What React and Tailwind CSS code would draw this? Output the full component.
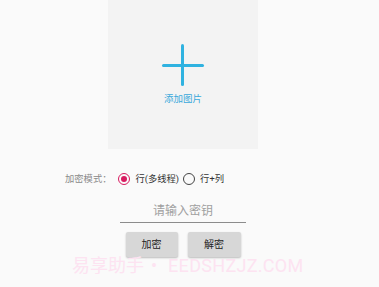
export default function App() {
  const font = { fontFamily: '"Roboto", "Noto Sans CJK SC", sans-serif' };
  return (
    <div className="w-[379px] h-[287px] bg-[#fafafa] overflow-hidden relative" style={font}>
      <div className="w-[366px] flex flex-col items-center">
        <div className="w-[150px] h-[149px] bg-[#f3f3f3] flex flex-col items-center">
          <div className="mt-[44px] w-[42px] h-[42px] relative">
            <div className="absolute left-[19px] top-0 w-[3px] h-[42px] bg-[#2fb2e0] rounded-full" />
            <div className="absolute top-[20px] left-0 h-[3px] w-[42px] bg-[#2fb2e0] rounded-full" />
          </div>
          <div className="mt-[6px] text-[9.5px] leading-[14px] text-[#3aa9db]">添加图片</div>
        </div>

        <div className="self-start pl-[65px] mt-[23px] flex items-center h-[14px] text-[9.3px] leading-[14px]">
          <span className="text-[#8a8a8a] mr-[6px]">加密模式：</span>
          <span className="w-[12px] h-[12px] rounded-full border-[1.5px] border-[#d81b60] flex items-center justify-center">
            <span className="w-[6px] h-[6px] rounded-full bg-[#d81b60]" />
          </span>
          <span className="ml-[6px] text-[#333]">行(多线程)</span>
          <span className="ml-[4px] w-[12px] h-[12px] rounded-full border-[1.5px] border-[#444]" />
          <span className="ml-[5px] text-[#333]">行+列</span>
        </div>

        <div className="mt-[17px] w-[126px] border-b border-[#8c8c8c] text-center text-[12px] leading-[16px] pb-[3px] text-[#a0a0a0]">
          请输入密钥
        </div>

        <div className="mt-[9px] flex gap-[10px]">
          <button className="w-[52px] h-[25px] bg-[#d7d7d7] text-[10px] text-[#222] rounded-[2px] shadow-[0_1px_2px_rgba(0,0,0,0.25)]">加密</button>
          <button className="w-[53px] h-[25px] bg-[#d7d7d7] text-[10px] text-[#222] rounded-[2px] shadow-[0_1px_2px_rgba(0,0,0,0.25)]">解密</button>
        </div>
      </div>
      <div className="absolute left-[72px] top-[255px] flex items-center text-[18px] leading-[22px] text-[#fde3f1] whitespace-nowrap">
        <span>易享助手</span>
        <span className="ml-[7px] mr-[11px]">•</span>
        <span className="tracking-[0.3px]">EEDSHZJZ.COM</span>
      </div>
    </div>
  );
}
